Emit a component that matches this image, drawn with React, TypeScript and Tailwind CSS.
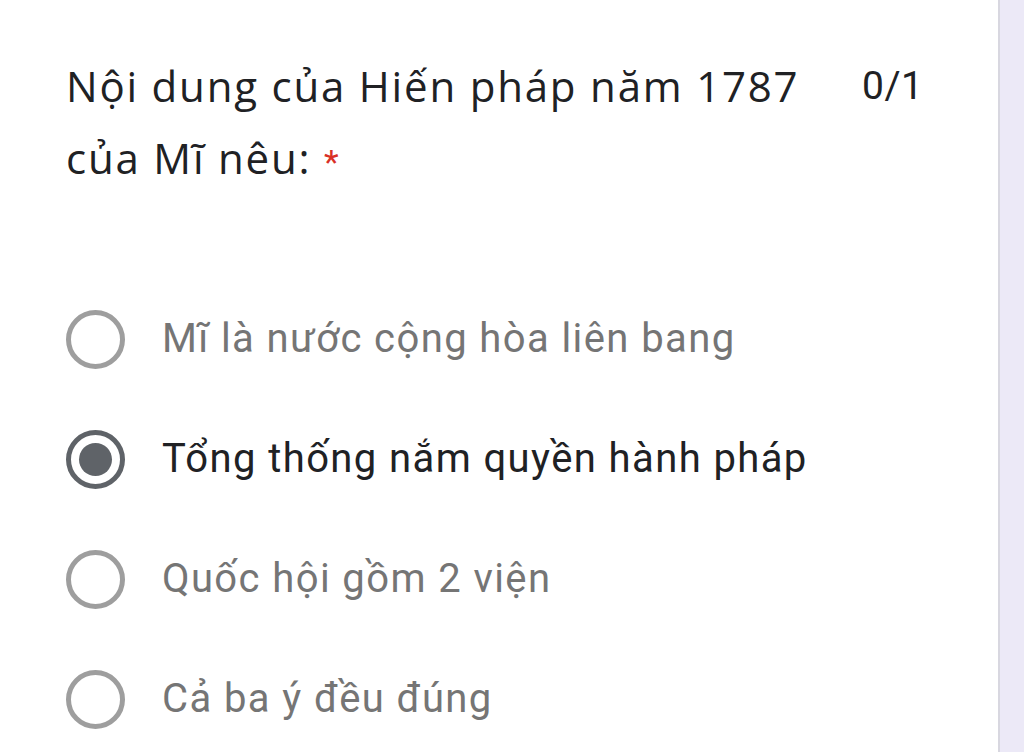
export default function App() {
    const options = [
        { label: "Mĩ là nước cộng hòa liên bang", selected: false },
        { label: "Tổng thống nắm quyền hành pháp", selected: true },
        { label: "Quốc hội gồm 2 viện", selected: false },
        { label: "Cả ba ý đều đúng", selected: false },
    ];

    return (
        <div className="flex w-[1024px] h-[752px] bg-white overflow-hidden">
            <div className="flex-1 flex flex-col pl-[66px] pt-[50px]">
                <div className="flex items-start">
                    <h1 className="w-[796px] text-[42px] leading-[72px] text-[#202124] font-['Open_Sans',sans-serif] tracking-[1.8px]">
                        Nội dung của Hiến pháp năm 1787
                        <br />
                        của Mĩ nêu: <span className="text-[34px] text-[#d93025] font-['Roboto',sans-serif]">*</span>
                    </h1>
                    <span className="text-[39px] leading-[72px] text-[#202124] font-['Roboto',sans-serif] tracking-[0.5px]">0/1</span>
                </div>

                <div className="flex flex-col mt-[81px]">
                    {options.map((o) => (
                        <div key={o.label} className="flex items-center h-[120px] font-['Roboto',sans-serif]">
                            <div
                                className={`w-[59px] h-[59px] rounded-full border-[5px] flex items-center justify-center ${o.selected ? "border-[#5f6368]" : "border-[#9e9e9e]"}`}
                            >
                                {o.selected && <div className="w-[33px] h-[33px] rounded-full bg-[#5f6368]" />}
                            </div>
                            <span
                                className={`ml-[37px] text-[40px] tracking-[1.4px] ${o.selected ? "text-[#202124]" : "text-[#757575]"}`}
                            >
                                {o.label}
                            </span>
                        </div>
                    ))}
                </div>
            </div>
            <div className="w-[26px] h-full border-l-2 border-[#d8d7e0] bg-[#ece9f7]" />
        </div>
    );
}
